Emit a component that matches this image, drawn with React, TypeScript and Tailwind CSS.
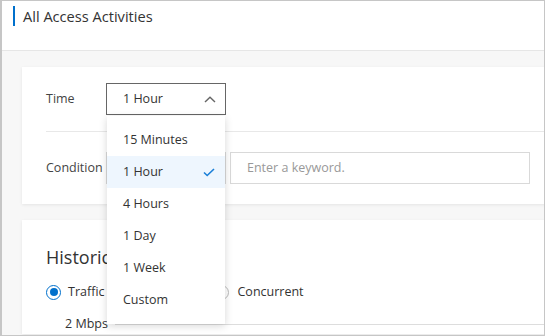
import React from "react";

const options = ["15 Minutes", "1 Hour", "4 Hours", "1 Day", "1 Week", "Custom"];

function ChevronUp() {
  return (
    <svg width="12" height="7" viewBox="0 0 12 7" fill="none">
      <path d="M1 6L6 1.2L11 6" stroke="#666" strokeWidth="1.4" />
    </svg>
  );
}

function Check() {
  return (
    <svg width="12" height="9" viewBox="0 0 12 9" fill="none">
      <path d="M1 4.5L4.2 7.5L11 1" stroke="#1a7fd8" strokeWidth="1.6" />
    </svg>
  );
}

function Radio({ checked }: { checked?: boolean }) {
  return (
    <span
      className={`flex h-[15px] w-[15px] items-center justify-center rounded-full border-[1.5px] bg-white ${
        checked ? "border-[#0070cc]" : "border-[#bbb]"
      }`}
    >
      {checked && <span className="h-[8px] w-[8px] rounded-full bg-[#0070cc]" />}
    </span>
  );
}

function TimeDropdown() {
  return (
    <div className="absolute left-[1px] top-[33px] z-10 w-[118px] bg-white py-2 shadow-[0_2px_8px_rgba(0,0,0,0.16)]">
      {options.map((label) => {
        const active = label === "1 Hour";
        return (
          <div
            key={label}
            className={`flex h-8 items-center justify-between pl-4 pr-[10px] pt-px text-[#333] ${
              active ? "bg-[#eef6fe]" : ""
            }`}
          >
            <span>{label}</span>
            {active && <Check />}
          </div>
        );
      })}
    </div>
  );
}

export default function App() {
  return (
    <div
      className="relative h-[336px] w-[545px] overflow-hidden border border-l-2 border-[#c6c6c6] bg-[#f7f7f7] text-[12.5px] text-[#333]"
      style={{ fontFamily: '"Open Sans", "Noto Sans", sans-serif' }}
    >
      <div className="h-[50px] border-b border-[#e6e6e6] bg-white pl-[11px] pt-[5px]">
        <div className="flex items-center">
          <span className="h-[20px] w-[2px] bg-[#0070cc]" />
          <span className="ml-[8px] text-[14.6px] leading-[20px] text-[#333]">All Access Activities</span>
        </div>
      </div>

      <div className="w-[560px] pl-5 pt-4">
        <div className="bg-white pl-6 shadow-[0_1px_3px_rgba(0,0,0,0.08)]">
          <div className="flex items-center py-4">
            <span className="w-[60px] text-[#444]">Time</span>
            <div className="relative">
              <div className="flex h-8 w-[120px] items-center justify-between border border-[#666] pl-4 pr-[9px]">
                <span>1 Hour</span>
                <ChevronUp />
              </div>
              <TimeDropdown />
            </div>
          </div>
          <div className="border-t border-[#e8e8e8]" />
          <div className="flex items-center py-5">
            <span className="w-[60px] text-[#444]">Condition</span>
            <div className="h-8 w-[120px] border border-[#d9d9d9]" />
            <div className="ml-[4px] flex h-8 w-[300px] items-center border border-[#d9d9d9] px-4 text-[#999]">
              Enter a keyword.
            </div>
          </div>
        </div>

        <div className="mt-4 bg-white pl-6 pt-[24px] shadow-[0_1px_3px_rgba(0,0,0,0.08)]">
          <div className="text-[18px] leading-[26px] text-[#333]">Historical Trend</div>
          <div className="mt-[13px] flex items-center">
            <Radio checked />
            <span className="ml-[7px]">Traffic</span>
            <span className="ml-[109px]">
              <Radio />
            </span>
            <span className="ml-[9px]">Concurrent</span>
          </div>
          <div className="mt-[13px] flex items-center">
            <span className="ml-[19px] w-[50px]">2 Mbps</span>
            <span className="h-px flex-1 bg-[#ddd]" />
          </div>
        </div>
      </div>
    </div>
  );
}
